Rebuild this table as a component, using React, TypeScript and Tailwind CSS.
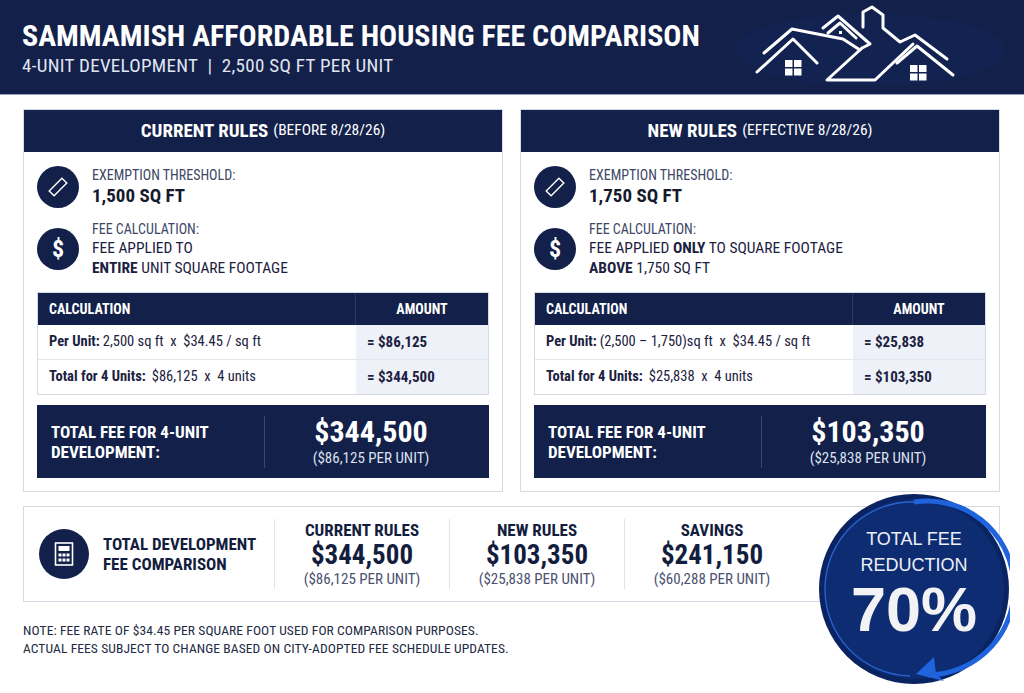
import React from "react";

const NAVY = "bg-[#12204a]";

function RulerIcon() {
  return (
    <div className="w-[42px] h-[42px] rounded-full bg-[#12204a] flex items-center justify-center shrink-0">
      <svg width="22" height="22" viewBox="0 0 22 22">
        <g transform="rotate(-45 11 11)">
          <rect x="2" y="7.5" width="18" height="7" fill="none" stroke="#fff" strokeWidth="1.4" />
        </g>
      </svg>
    </div>
  );
}

function DollarIcon() {
  return (
    <div className="w-[42px] h-[42px] rounded-full bg-[#12204a] flex items-center justify-center shrink-0">
      <span className="text-white font-bold text-[24px] leading-none font-['Roboto_Condensed','Roboto',sans-serif]">$</span>
    </div>
  );
}

function CalcIcon() {
  return (
    <div className="w-[50px] h-[50px] rounded-full bg-[#12204a] flex items-center justify-center shrink-0">
      <svg width="20" height="24" viewBox="0 0 20 24">
        <rect x="1.5" y="1" width="17" height="22" fill="none" stroke="#fff" strokeWidth="1.6" />
        <rect x="4.5" y="4" width="11" height="5" fill="#fff" />
        <rect x="4.5" y="11.5" width="3" height="3" fill="#fff" />
        <rect x="8.5" y="11.5" width="3" height="3" fill="#fff" />
        <rect x="12.5" y="11.5" width="3" height="3" fill="#fff" />
        <rect x="4.5" y="16.5" width="3" height="3" fill="#fff" />
        <rect x="8.5" y="16.5" width="3" height="3" fill="#fff" />
        <rect x="12.5" y="16.5" width="3" height="3" fill="#fff" />
      </svg>
    </div>
  );
}

function HouseLogo() {
  return (
    <svg width="270" height="95" viewBox="735 0 270 95" className="shrink-0">
      <ellipse cx="870" cy="50" rx="135" ry="36" fill="#15255a" opacity="0.45" />
      <g fill="none" stroke="#fff" strokeWidth="3" strokeLinejoin="round" strokeLinecap="round">
        <path d="M757 72 L793 39 L817 63" />
        <path d="M764 53 L792 29 L843 39 L860 50" />
        <path d="M823 28 L838 16 L870 44 L862 48" />
        <path d="M828 33 L840 23 L856 38" />
        <path d="M862 48 L827 80 L875 80 L913 44" />
        <path d="M863 27 L863 12 L872 7 L883 15 L883 28 L900 42 L915 35 L947 59" />
        <path d="M897 63 L917 46 L953 75" />
      </g>
      <rect x="839" y="31" width="3" height="3" fill="#fff" />
      <g fill="#fff">
        <rect x="785" y="60" width="7.5" height="7" />
        <rect x="794" y="60" width="7.5" height="7" />
        <rect x="785" y="68.5" width="7.5" height="7" />
        <rect x="794" y="68.5" width="7.5" height="7" />
        <rect x="910" y="65" width="7.5" height="7" />
        <rect x="919" y="65" width="7.5" height="7" />
        <rect x="910" y="73.5" width="7.5" height="7" />
        <rect x="919" y="73.5" width="7.5" height="7" />
      </g>
    </svg>
  );
}

function Badge() {
  return (
    <div className="absolute left-[818px] top-[493px] w-[192px] h-[192px]">
      <svg width="192" height="200" viewBox="0 0 192 200" className="absolute left-0 top-0">
        <circle cx="96" cy="96" r="95" fill="#0a2361" />
        <circle cx="96" cy="96" r="90" fill="#0d2c71" />
        <path d="M96 9 A87 87 0 0 0 92 183" fill="none" stroke="#2a62d0" strokeWidth="1.3" />
        <path d="M96 9 A87 87 0 1 1 110 182" fill="none" stroke="#1f63dd" strokeWidth="5" />
        <path d="M116 164 L98 181 L126 188 L118 181 Z" fill="#1f63dd" />
      </svg>
      <div className="relative flex flex-col items-center pt-[33px] text-[#eef1f8] font-['Liberation_Sans',Arial,sans-serif]">
        <div className="text-[18px] leading-[26px]">TOTAL FEE</div>
        <div className="text-[18px] leading-[26px]">REDUCTION</div>
        <div className="text-[63px] font-bold leading-[60px] mt-[1px] text-[#f3f3f5]">70%</div>
      </div>
    </div>
  );
}

function RuleCard({
  title,
  sub,
  threshold,
  feeLine1,
  feeLine2,
  perUnitCalc,
  perUnitAmt,
  totalCalc,
  totalAmt,
  big,
  perUnitNote,
}: {
  title: string;
  sub: string;
  threshold: string;
  feeLine1: React.ReactNode;
  feeLine2: React.ReactNode;
  perUnitCalc: string;
  perUnitAmt: string;
  totalCalc: string;
  totalAmt: string;
  big: string;
  perUnitNote: string;
}) {
  return (
    <div className="border border-[#d5dae4] bg-white">
      <div className={`${NAVY} h-[42px] flex items-center justify-center text-white`}>
        <span className="font-bold text-[19px]">{title}</span>
        <span className="text-[15.5px] ml-[5px]">{sub}</span>
      </div>
      <div className="px-[13px] pt-[14px] pb-[13px]">
        <div className="flex items-center gap-[13px]">
          <RulerIcon />
          <div>
            <div className="text-[14px] leading-[18px] text-[#3d4666]">EXEMPTION THRESHOLD:</div>
            <div className="text-[19px] leading-[24px] font-bold text-[#151a2c]">{threshold}</div>
          </div>
        </div>
        <div className="flex items-center gap-[13px] mt-[12px]">
          <DollarIcon />
          <div>
            <div className="text-[14px] leading-[18px] text-[#3d4666]">FEE CALCULATION:</div>
            <div className="text-[15.5px] leading-[20px] text-[#1b2140]">{feeLine1}</div>
            <div className="text-[15.5px] leading-[20px] text-[#1b2140]">{feeLine2}</div>
          </div>
        </div>
        <div className="mt-[14px] border border-[#d5dae4]">
          <div className={`${NAVY} h-[32px] flex text-white font-bold text-[14px]`}>
            <div className="w-[318px] pl-[11px] flex items-center border-r border-[#2a3762]">CALCULATION</div>
            <div className="flex-1 flex items-center justify-center">AMOUNT</div>
          </div>
          <div className="flex h-[35px] border-b border-[#e2e6ee] text-[14.5px] text-[#1b2140]">
            <div className="w-[318px] pl-[11px] flex items-center">
              <span className="font-bold mr-[3px]">Per Unit:</span>
              <span className="whitespace-pre">{perUnitCalc}</span>
            </div>
            <div className="flex-1 bg-[#eef1f8] pl-[11px] flex items-center font-bold text-[15px]">= {perUnitAmt}</div>
          </div>
          <div className="flex h-[34px] text-[14.5px] text-[#1b2140]">
            <div className="w-[318px] pl-[11px] flex items-center">
              <span className="font-bold mr-[6px]">Total for 4 Units:</span>
              <span className="whitespace-pre">{totalCalc}</span>
            </div>
            <div className="flex-1 bg-[#eef1f8] pl-[11px] flex items-center font-bold text-[15px]">= {totalAmt}</div>
          </div>
        </div>
        <div className={`${NAVY} mt-[10px] h-[73px] flex items-center text-white`}>
          <div className="w-[227px] pl-[14px] font-bold text-[17px] leading-[20px]">
            TOTAL FEE FOR 4-UNIT
            <br />
            DEVELOPMENT:
          </div>
          <div className="w-px h-[52px] bg-[#3a4670]" />
          <div className="flex-1 flex flex-col items-center pr-[12px]">
            <div className="font-bold text-[30px] leading-[32px]">{big}</div>
            <div className="text-[15px] leading-[20px] text-[#dde2ee]">{perUnitNote}</div>
          </div>
        </div>
      </div>
    </div>
  );
}

function SumCol({ label, value, note, border }: { label: string; value: string; note: string; border: boolean }) {
  return (
    <div className={`w-[175px] h-[70px] flex flex-col items-center justify-center ${border ? "border-l border-[#dfe3ea]" : ""}`}>
      <div className="font-bold text-[17px] leading-[20px] text-[#131d3d]">{label}</div>
      <div className="font-bold text-[27px] leading-[30px] text-[#131d3d]">{value}</div>
      <div className="text-[15px] leading-[18px] text-[#4a5270]">{note}</div>
    </div>
  );
}

export default function App() {
  return (
    <div className="relative w-[1024px] h-[693px] bg-white overflow-hidden font-['Roboto_Condensed','Roboto',sans-serif]">
      <div className={`${NAVY} h-[95px] flex items-center justify-between pl-[22px] pr-[19px] border-b border-[#9aa3b8]`}>
        <div className="pt-[2px]">
          <div className="text-white font-bold text-[30px] leading-[34px]">SAMMAMISH AFFORDABLE HOUSING FEE COMPARISON</div>
          <div className="text-[#e1e6f1] text-[19px] leading-[24px] mt-[1px] tracking-[0.3px]">4-UNIT DEVELOPMENT&nbsp; |&nbsp; 2,500 SQ FT PER UNIT</div>
        </div>
        <HouseLogo />
      </div>

      <div className="px-[23px] pr-[24px]">
        <div className="grid grid-cols-2 gap-[17px] mt-[14px]">
          <RuleCard
            title="CURRENT RULES"
            sub="(BEFORE 8/28/26)"
            threshold="1,500 SQ FT"
            feeLine1={<>FEE APPLIED TO</>}
            feeLine2={
              <>
                <b>ENTIRE</b> UNIT SQUARE FOOTAGE
              </>
            }
            perUnitCalc="2,500 sq ft  x  $34.45 / sq ft"
            perUnitAmt="$86,125"
            totalCalc="$86,125  x  4 units"
            totalAmt="$344,500"
            big="$344,500"
            perUnitNote="($86,125 PER UNIT)"
          />
          <RuleCard
            title="NEW RULES"
            sub="(EFFECTIVE 8/28/26)"
            threshold="1,750 SQ FT"
            feeLine1={
              <>
                FEE APPLIED <b>ONLY</b> TO SQUARE FOOTAGE
              </>
            }
            feeLine2={
              <>
                <b>ABOVE</b> 1,750 SQ FT
              </>
            }
            perUnitCalc="(2,500 – 1,750)sq ft  x  $34.45 / sq ft"
            perUnitAmt="$25,838"
            totalCalc="$25,838  x  4 units"
            totalAmt="$103,350"
            big="$103,350"
            perUnitNote="($25,838 PER UNIT)"
          />
        </div>

        <div className="mt-[14px] h-[96px] border border-[#d5dae4] flex items-center pl-[15px]">
          <CalcIcon />
          <div className="ml-[14px] w-[171px] font-bold text-[17px] leading-[20px] text-[#131d3d]">
            TOTAL DEVELOPMENT
            <br />
            FEE COMPARISON
          </div>
          <SumCol label="CURRENT RULES" value="$344,500" note="($86,125 PER UNIT)" border />
          <SumCol label="NEW RULES" value="$103,350" note="($25,838 PER UNIT)" border />
          <SumCol label="SAVINGS" value="$241,150" note="($60,288 PER UNIT)" border />
        </div>

        <div className="mt-[19px] text-[13.5px] leading-[18px] text-[#222a44] tracking-[0.1px]">
          <div>NOTE: FEE RATE OF $34.45 PER SQUARE FOOT USED FOR COMPARISON PURPOSES.</div>
          <div>ACTUAL FEES SUBJECT TO CHANGE BASED ON CITY-ADOPTED FEE SCHEDULE UPDATES.</div>
        </div>
      </div>

      <Badge />
    </div>
  );
}
